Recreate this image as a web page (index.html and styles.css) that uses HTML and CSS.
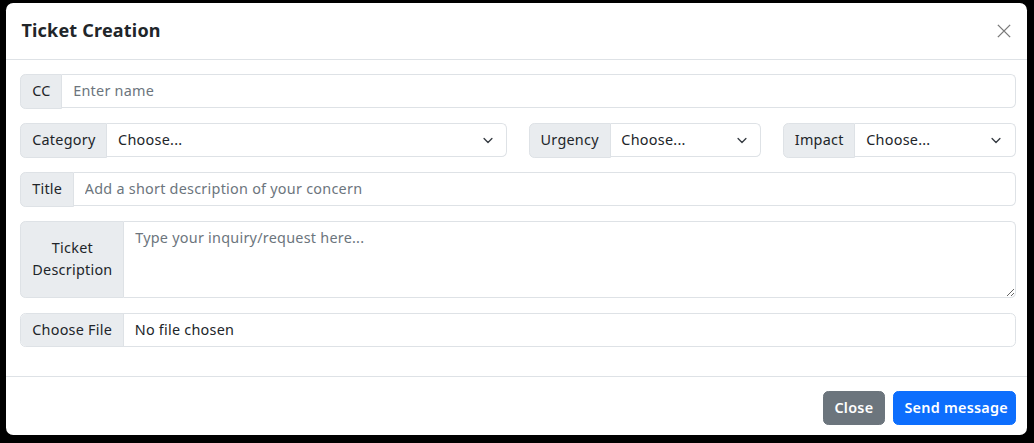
FILE: index.html
```html
<!DOCTYPE html>
<html lang="en">
<head>
<meta charset="utf-8">
<title>Ticket Creation</title>
<link rel="stylesheet" href="styles.css">
</head>
<body>
<div class="modal">
  <div class="modal-header">
    <h5 class="modal-title">Ticket Creation</h5>
    <button class="btn-close" type="button" aria-label="Close">
      <svg viewBox="0 0 16 16" width="14" height="14"><path d="M1 1 15 15M15 1 1 15" stroke="#7a7a7a" stroke-width="1.6" fill="none"/></svg>
    </button>
  </div>
  <div class="modal-body">
    <div class="input-group">
      <span class="input-group-text">CC</span>
      <input class="form-control" type="text" placeholder="Enter name">
    </div>
    <div class="select-row">
      <div class="input-group">
        <span class="input-group-text">Category</span>
        <select class="form-select"><option>Choose...</option></select>
      </div>
      <div class="input-group">
        <span class="input-group-text">Urgency</span>
        <select class="form-select"><option>Choose...</option></select>
      </div>
      <div class="input-group">
        <span class="input-group-text">Impact</span>
        <select class="form-select"><option>Choose...</option></select>
      </div>
    </div>
    <div class="input-group">
      <span class="input-group-text">Title</span>
      <input class="form-control" type="text" placeholder="Add a short description of your concern">
    </div>
    <div class="input-group">
      <span class="input-group-text wrap">Ticket<br>Description</span>
      <textarea class="form-control" rows="3" placeholder="Type your inquiry/request here..."></textarea>
    </div>
    <div class="input-group">
      <input class="form-file" type="file">
    </div>
  </div>
  <div class="modal-footer">
    <button class="btn btn-secondary" type="button">Close</button>
    <button class="btn btn-primary" type="button">Send message</button>
  </div>
</div>
</body>
</html>
```
FILE: styles.css
```css
* { box-sizing: border-box; }
html, body { height: 100%; }
body {
  margin: 0;
  padding: 3px 7px 0 6px;
  background: #000;
  font-family: "Noto Sans", "Open Sans", sans-serif;
  font-size: 14.4px;
  line-height: 1.5;
  letter-spacing: 0.25px;
  color: #212529;
}
.modal {
  background: #fff;
  border-radius: 7.2px;
  width: 1021px;
  display: flex;
  flex-direction: column;
}
.modal-header {
  display: flex;
  align-items: center;
  justify-content: space-between;
  padding: 14.4px;
  border-bottom: 1px solid #dee2e6;
}
.modal-title {
  margin: 0;
  font-size: 18px;
  line-height: 27px;
  font-weight: 700;
  letter-spacing: 0.2px;
  color: #212529;
  padding-left: 1px;
}
.btn-close {
  border: 0;
  background: transparent;
  padding: 0;
  width: 16px;
  height: 16px;
  display: flex;
  align-items: center;
  justify-content: center;
  margin-right: 1px;
  cursor: pointer;
}
.modal-body {
  padding: 14.4px 11.4px 28.8px 14.4px;
  display: flex;
  flex-direction: column;
  gap: 14.6px;
}
.input-group {
  display: flex;
  align-items: stretch;
  width: 100%;
}
.input-group-text {
  display: flex;
  align-items: center;
  justify-content: center;
  padding: 4.8px 10.8px 6px;
  background: #e9ecef;
  border: 1px solid #dee2e6;
  border-radius: 5.4px 0 0 5.4px;
  white-space: nowrap;
  text-align: center;
  color: #212529;
}
.input-group-text.wrap { white-space: normal; width: 104px; }
.form-control, .form-select {
  flex: 1 1 auto;
  min-width: 0;
  font: inherit;
  letter-spacing: inherit;
  color: #212529;
  background-color: #fff;
  border: 1px solid #dee2e6;
  border-left: 0;
  border-radius: 0 5.4px 5.4px 0;
  padding: 4.8px 10.8px 6px;
  height: 34px;
  outline: none;
}
.form-control::placeholder { color: #6c757d; opacity: 1; }
textarea.form-control { height: 77px; resize: vertical; }
.form-select {
  appearance: none;
  -webkit-appearance: none;
  padding-right: 32px;
  background-image: url("data:image/svg+xml,%3csvg xmlns='http://www.w3.org/2000/svg' viewBox='0 0 16 16'%3e%3cpath fill='none' stroke='%23343a40' stroke-linecap='round' stroke-linejoin='round' stroke-width='2' d='m2 5 6 6 6-6'/%3e%3c/svg%3e");
  background-repeat: no-repeat;
  background-position: right 10.8px center;
  background-size: 14.4px 10.8px;
}
.select-row {
  display: grid;
  grid-template-columns: calc(50% - 10.8px) calc(25% - 16.2px) calc(25% - 16.2px);
  gap: 21.6px;
}
.form-file {
  flex: 1 1 auto;
  font: inherit;
  letter-spacing: inherit;
  color: #212529;
  border: 1px solid #dee2e6;
  border-radius: 5.4px;
  height: 34px;
  padding: 0;
  overflow: hidden;
  background: #fff;
}
.form-file::file-selector-button {
  font: inherit;
  letter-spacing: inherit;
  color: #212529;
  background: #e9ecef;
  border: 0;
  border-right: 1px solid #dee2e6;
  border-radius: 0;
  height: 100%;
  padding: 4.8px 10.8px 6px;
  margin: 0 10.8px 0 0;
}
.modal-footer {
  display: flex;
  justify-content: flex-end;
  align-items: center;
  gap: 8px;
  padding: 14px 11.4px 10.8px 14.4px;
  border-top: 1px solid #dee2e6;
}
.btn {
  font: inherit;
  letter-spacing: inherit;
  font-weight: 600;
  color: #fff;
  border: 1px solid transparent;
  border-radius: 5.4px;
  padding: 5.4px 10.8px;
  height: 34px;
  white-space: nowrap;
  cursor: pointer;
}
.btn-secondary { background: #6c757d; border-color: #6c757d; width: 62px; }
.btn-primary { background: #0d6efd; border-color: #0d6efd; width: 123px; }
```
